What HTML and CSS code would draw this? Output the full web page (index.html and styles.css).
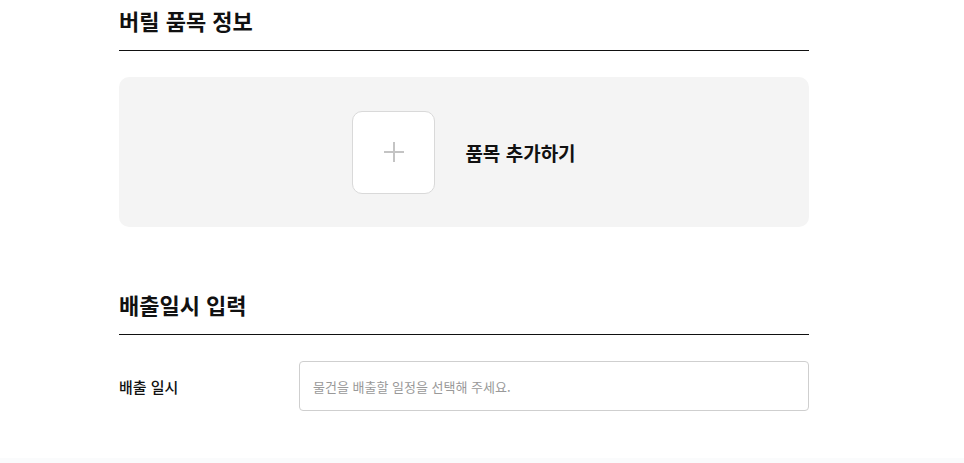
FILE: index.html
```html
<!DOCTYPE html>
<html lang="ko">
  <head>
    <meta charset="UTF-8" />
    <meta name="viewport" content="width=device-width, initial-scale=1.0" />
    <title>버릴 품목 정보</title>
    <link rel="stylesheet" href="styles.css">
  </head>
  <body>
    <main class="page">
      <!-- 품목 정보 -->
      <section class="block">
        <h2 class="block-title">버릴 품목 정보</h2>
        <div class="item-add">
          <button class="item-add-btn" type="button" aria-label="품목 추가">
            <svg width="22" height="22" viewBox="0 0 22 22">
              <path d="M11 1v20M1 11h20" stroke="#c4c4c4" stroke-width="2" fill="none" />
            </svg>
          </button>
          <span class="item-add-label">품목 추가하기</span>
        </div>
      </section>

      <!-- 배출일시 -->
      <section class="block block-date">
        <h2 class="block-title">배출일시 입력</h2>
        <div class="form-row">
          <label class="form-label" for="date">배출 일시</label>
          <input class="form-input" id="date" type="text" placeholder="물건을 배출할 일정을 선택해 주세요." readonly />
        </div>
      </section>
    </main>
    <footer class="footer"></footer>
  </body>
</html>
```

FILE: styles.css
```css
* {
  margin: 0;
  padding: 0;
  box-sizing: border-box;
  font-family: "Noto Sans CJK KR", "Noto Sans", sans-serif;
}
body {
  background: #fff;
  color: #111;
}

.page {
  width: 690px;
  margin-left: 119px;
}

/* SECTION */
.block-title {
  font-size: 22px;
  font-weight: 700;
  line-height: 32px;
  padding-top: 4px;
  padding-bottom: 14px;
  border-bottom: 1px solid #111;
}
.block-date {
  margin-top: 57px;
}

/* ITEM ADD */
.item-add {
  margin-top: 26px;
  height: 150px;
  background: #f4f4f4;
  border-radius: 10px;
  display: flex;
  align-items: center;
  justify-content: center;
  gap: 30px;
}
.item-add-btn {
  width: 83px;
  height: 83px;
  background: #fff;
  border: 1px solid #d9d9d9;
  border-radius: 10px;
  display: flex;
  align-items: center;
  justify-content: center;
  cursor: pointer;
}
.item-add-label {
  font-size: 19px;
  font-weight: 700;
}

/* FORM */
.form-row {
  display: flex;
  align-items: center;
  margin-top: 26px;
}
.form-label {
  width: 180px;
  font-size: 15px;
  font-weight: 500;
}
.form-input {
  flex: 1;
  height: 50px;
  border: 1px solid #cfcfcf;
  border-radius: 4px;
  padding: 0 13px;
  font-size: 13px;
  color: #333;
  outline: none;
}
.form-input::placeholder {
  color: #999;
}

.footer {
  margin-top: 47px;
  height: 20px;
  background: #fafbfc;
}
```
